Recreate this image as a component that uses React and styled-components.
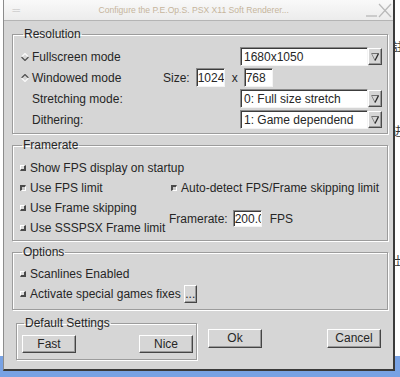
import styled, { createGlobalStyle } from 'styled-components';

const GlobalStyle = createGlobalStyle`
  html, body {
    margin: 0;
    padding: 0;
    background: #fff;
  }
`;

const Desktop = styled.div`
  position: relative;
  width: 400px;
  height: 377px;
  overflow: hidden;
  background: linear-gradient(to bottom, #fff 0, #fff 356px, #78a2e4 356px);
`;

const StrayGlyph = styled.span`
  position: absolute;
  left: ${(p) => p.$x}px;
  top: ${(p) => p.$y}px;
  font-family: "Noto Sans CJK SC", sans-serif;
  font-size: 12px;
  line-height: 14px;
  color: #333;
`;

const Window = styled.div`
  position: relative;
  z-index: 1;
  box-sizing: border-box;
  width: 392px;
  height: 371px;
  margin-left: 3px;
  border-left: 1px solid #8c8c8c;
  border-right: 2px solid #3a3a3a;
  border-bottom: 2px solid #3a3a3a;
  background: #d6d6d6;
  display: flex;
  flex-direction: column;
  font-family: "Liberation Sans", Arial, sans-serif;
  font-size: 12px;
  color: #262626;
`;

const TitleBar = styled.div`
  flex: none;
  height: 20px;
  display: flex;
  align-items: center;
  padding: 0 1px 0 8px;
  border-bottom: 1px solid #b4b4b4;
  background: linear-gradient(#f9f9f9, #ececec);
`;

const Grip = styled.span`
  font-size: 8px;
  color: #bdbdbd;
  letter-spacing: -1px;
`;

const Title = styled.span`
  flex: 1;
  text-align: center;
  font-size: 8.6px;
  color: #c6b59c;
  padding-left: 4px;
`;

const Body = styled.div`
  flex: 1;
  display: flex;
  flex-direction: column;
  gap: 4px;
  padding: 6px 5px 0 8px;
`;

const Frame = styled.fieldset`
  margin: 0;
  padding: ${(p) => p.$pad};
  border: 1px solid #9c9c9c;
  box-shadow: inset 1px 1px 0 #fff, 1px 1px 0 #fff;
  min-width: 0;
  ${(p) => p.$width && `width: ${p.$width}px; box-sizing: border-box;`}
`;

const Legend = styled.legend`
  padding: 0 1px;
  margin-left: 2px;
  font-size: 12px;
  line-height: 14px;
`;

const Stack = styled.div`
  display: flex;
  flex-direction: column;
  gap: ${(p) => p.$gap || 0}px;
`;

const Row = styled.div`
  display: flex;
  align-items: center;
  height: ${(p) => p.$h || 20}px;
`;

const LabelCell = styled.div`
  display: flex;
  align-items: center;
  gap: 3px;
  width: ${(p) => p.$w}px;
  padding-left: ${(p) => p.$indent || 0}px;
  box-sizing: border-box;
  flex: none;
`;

const Text = styled.span`
  white-space: nowrap;
  margin-left: ${(p) => p.$ml || 0}px;
`;

const Entry = styled.div`
  box-sizing: border-box;
  width: ${(p) => p.$w}px;
  height: ${(p) => p.$h || 19}px;
  margin-left: ${(p) => p.$ml || 0}px;
  background: #fff;
  border: 1px solid;
  border-color: #8a8a8a #f4f4f4 #f4f4f4 #8a8a8a;
  box-shadow: inset 1px 1px 0 #3c3c3c;
  padding: 1px 0 0 ${(p) => p.$pl ?? 3}px;
  display: flex;
  align-items: center;
  overflow: hidden;
  white-space: nowrap;
`;

const Combo = styled.div`
  display: flex;
  align-items: stretch;
  width: 142px;
  height: 19px;
`;

const ComboButton = styled.div`
  box-sizing: border-box;
  width: 14px;
  margin: 1px 0;
  border: 1px solid;
  border-color: #fff #4a4a4a #4a4a4a #fff;
  box-shadow: inset -1px -1px 0 #9a9a9a;
  display: flex;
  align-items: center;
  justify-content: center;
`;

const Check = styled.span`
  flex: none;
  width: 3px;
  height: 3px;
  border-style: solid;
  border-width: ${(p) => (p.$on ? '2px 1px 1px 2px' : '1px 2px 2px 1px')};
  border-color: ${(p) =>
    p.$on ? '#4a4a4a #fff #fff #4a4a4a' : '#fff #4a4a4a #4a4a4a #fff'};
  background: ${(p) => (p.$on ? '#c9c9c9' : '#dcdcdc')};
`;

const CheckOption = styled.label`
  display: flex;
  align-items: center;
  gap: 4px;
  white-space: nowrap;
`;

const FramerateGrid = styled.div`
  display: grid;
  grid-template-columns: 151px 1fr;
  grid-template-rows: repeat(4, 20px);
  align-items: center;
`;

const RateCell = styled.div`
  grid-column: 2;
  grid-row: 3 / span 2;
  display: flex;
  align-items: center;
  margin-left: -2px;
  padding-top: 1px;
`;

const Button = styled.button`
  box-sizing: border-box;
  width: ${(p) => p.$w || 54}px;
  height: ${(p) => p.$h || 19}px;
  margin: 0;
  margin-left: ${(p) => p.$ml || 0}px;
  padding: 0;
  font-family: "Liberation Sans", Arial, sans-serif;
  font-size: 12px;
  color: #262626;
  background: #d6d6d6;
  border: 1px solid;
  border-color: #fff #454545 #454545 #fff;
  box-shadow: inset -1px -1px 0 #9a9a9a;
  line-height: 1;
`;

const BottomRow = styled.div`
  display: flex;
  align-items: center;
  margin-top: 2px;
  padding-left: 4px;
`;

const PairRow = styled.div`
  display: flex;
  justify-content: space-between;
  padding-right: 1px;
`;

function Radio({ on }) {
  const top = on ? '#505050' : '#fafafa';
  const bottom = on ? '#fafafa' : '#505050';
  return (
    <svg width="8" height="8" viewBox="0 0 8 8" style={{ flex: 'none' }}>
      <polyline points="0.5,4 4,0.5 7.5,4" fill="none" stroke={top} strokeWidth="1.2" />
      <polyline points="0.5,4 4,7.5 7.5,4" fill="none" stroke={bottom} strokeWidth="1.2" />
    </svg>
  );
}

function Arrow() {
  return (
    <svg width="8" height="9" viewBox="0 0 8 9">
      <polyline points="0.5,1.5 7.5,1.5" stroke="#707070" strokeWidth="1" fill="none" />
      <polyline points="0.5,1.5 4,8.5" stroke="#8a8a8a" strokeWidth="1" fill="none" />
      <polyline points="7.5,1.5 4,8.5" stroke="#2a2a2a" strokeWidth="1.3" fill="none" />
    </svg>
  );
}

function ComboBox({ value }) {
  return (
    <Combo>
      <Entry $w={128}>{value}</Entry>
      <ComboButton>
        <Arrow />
      </ComboButton>
    </Combo>
  );
}

function WindowControls() {
  return (
    <svg width="28" height="18" viewBox="0 0 28 18">
      <line x1="2" y1="15" x2="13" y2="15" stroke="#b9b9b9" strokeWidth="1.3" />
      <line x1="15" y1="3" x2="27" y2="16" stroke="#b9b9b9" strokeWidth="1.2" />
      <line x1="27" y1="3" x2="15" y2="16" stroke="#b9b9b9" strokeWidth="1.2" />
    </svg>
  );
}

export default function App() {
  return (
    <>
      <GlobalStyle />
      <Desktop>
        <StrayGlyph $x={392} $y={40}>註</StrayGlyph>
        <StrayGlyph $x={392} $y={124}>进</StrayGlyph>
        <StrayGlyph $x={392} $y={254}>岀</StrayGlyph>
        <Window>
          <TitleBar>
            <Grip>==</Grip>
            <Title>Configure the P.E.Op.S. PSX X11 Soft Renderer...</Title>
            <WindowControls />
          </TitleBar>
          <Body>
            <Frame $pad="6px 3px 4px 8px">
              <Legend>Resolution</Legend>
              <Stack $gap={2}>
                <Row $h={19}>
                  <LabelCell $w={219}>
                    <Radio />
                    <Text>Fullscreen mode</Text>
                  </LabelCell>
                  <ComboBox value="1680x1050" />
                </Row>
                <Row $h={19}>
                  <LabelCell $w={142}>
                    <Radio on />
                    <Text>Windowed mode</Text>
                  </LabelCell>
                  <Text>Size:</Text>
                  <Entry $w={29} $ml={6} $pl={1}>1024</Entry>
                  <Text $ml={7}>x</Text>
                  <Entry $w={29} $ml={6} $pl={1}>768</Entry>
                </Row>
                <Row $h={19}>
                  <LabelCell $w={219} $indent={11}>
                    <Text>Stretching mode:</Text>
                  </LabelCell>
                  <ComboBox value="0: Full size stretch" />
                </Row>
                <Row $h={19}>
                  <LabelCell $w={219} $indent={11}>
                    <Text>Dithering:</Text>
                  </LabelCell>
                  <ComboBox value="1: Game dependend" />
                </Row>
              </Stack>
            </Frame>

            <Frame $pad="6px 3px 2px 7px">
              <Legend>Framerate</Legend>
              <FramerateGrid>
                <CheckOption>
                  <Check />
                  Show FPS display on startup
                </CheckOption>
                <span />
                <CheckOption>
                  <Check $on />
                  Use FPS limit
                </CheckOption>
                <CheckOption>
                  <Check $on />
                  Auto-detect FPS/Frame skipping limit
                </CheckOption>
                <CheckOption>
                  <Check />
                  Use Frame skipping
                </CheckOption>
                <CheckOption style={{ gridRow: 4, gridColumn: 1 }}>
                  <Check />
                  Use SSSPSX Frame limit
                </CheckOption>
                <RateCell>
                  <Text>Framerate:</Text>
                  <Entry $w={29} $h={17} $ml={5} $pl={1}>200.0</Entry>
                  <Text $ml={8}>FPS</Text>
                </RateCell>
              </FramerateGrid>
            </Frame>

            <Frame $pad="5px 3px 5px 7px">
              <Legend>Options</Legend>
              <Stack>
                <Row>
                  <CheckOption>
                    <Check />
                    Scanlines Enabled
                  </CheckOption>
                </Row>
                <Row>
                  <CheckOption>
                    <Check />
                    Activate special games fixes
                  </CheckOption>
                  <Button $w={13} $h={18} $ml={3}>...</Button>
                </Row>
              </Stack>
            </Frame>

            <BottomRow>
              <Frame $pad="5px 2px 6px 5px" $width={181}>
                <Legend>Default Settings</Legend>
                <PairRow>
                  <Button $h={18}>Fast</Button>
                  <Button $h={18}>Nice</Button>
                </PairRow>
              </Frame>
              <Button $ml={11}>Ok</Button>
              <Button $ml={65}>Cancel</Button>
            </BottomRow>
          </Body>
        </Window>
      </Desktop>
    </>
  );
}
